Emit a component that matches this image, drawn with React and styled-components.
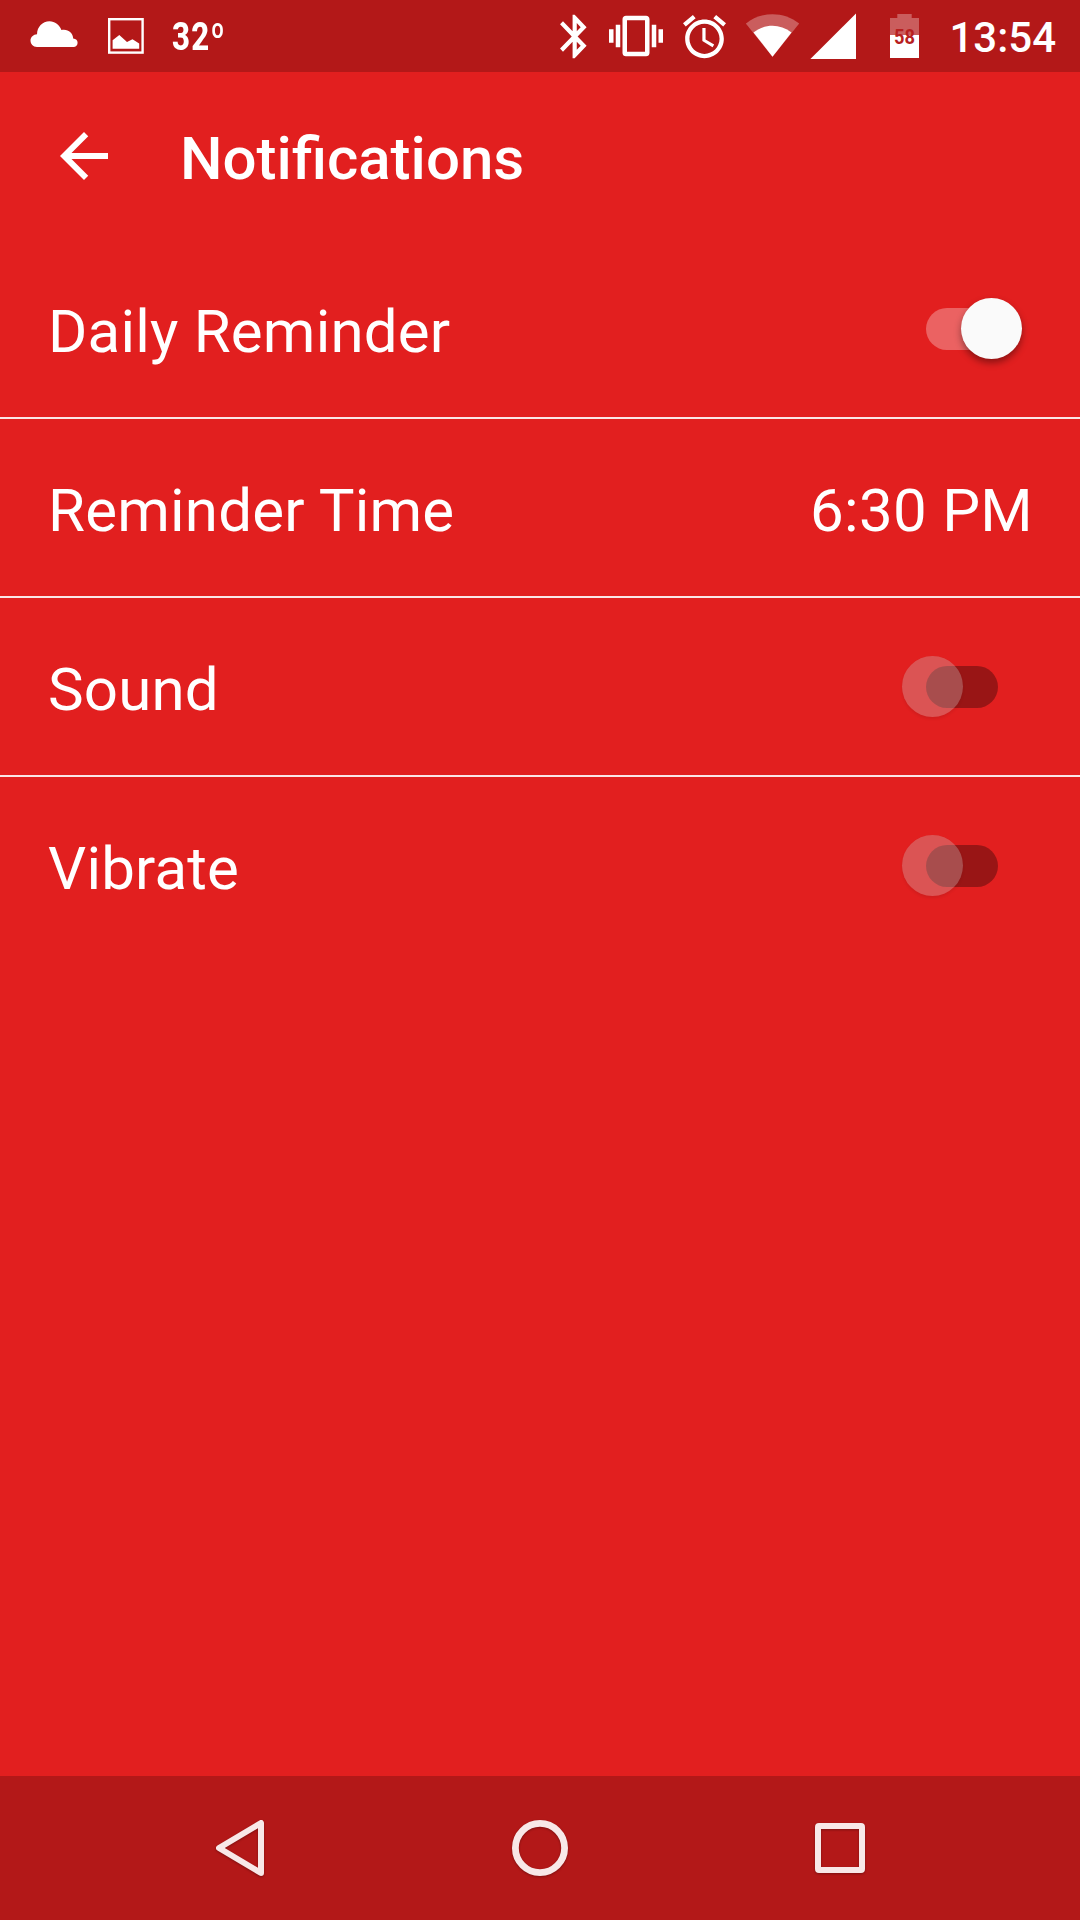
import React, { useState } from 'react';
import styled, { createGlobalStyle } from 'styled-components';

const GlobalStyle = createGlobalStyle`
  * {
    box-sizing: border-box;
  }

  body {
    margin: 0;
    background: #e21f1f;
  }
`;

const Screen = styled.div`
  width: 1080px;
  height: 1920px;
  display: flex;
  flex-direction: column;
  overflow: hidden;
  background: #e21f1f;
  color: #ffffff;
  font-family: Roboto, sans-serif;
`;

const StatusBar = styled.div`
  height: 72px;
  flex: none;
  display: flex;
  justify-content: space-between;
  padding: 0 24px 0 30px;
  background: #b31818;
`;

const StatusGroup = styled.div`
  display: flex;
  align-items: center;
`;

const StatusIcon = styled.svg`
  display: block;
  flex: none;
  height: 72px;
  width: ${(props) => props.$width}px;
  margin-right: ${(props) => props.$gap || 0}px;
  fill: #ffffff;
`;

const Temperature = styled.span`
  padding-top: 2px;
  font-size: 38px;
  font-weight: 800;
  line-height: 70px;
  letter-spacing: 1.5px;
  transform: scaleX(0.82);
  transform-origin: left center;
`;

const Clock = styled.span`
  width: 106px;
  padding: 3px 0 0;
  font-size: 42px;
  font-weight: 500;
  line-height: 69px;
  display: flex;
  justify-content: flex-end;
  white-space: nowrap;
`;

const Header = styled.header`
  height: 168px;
  flex: none;
  display: flex;
  align-items: center;
  padding-left: 48px;
`;

const BackButton = styled.button`
  width: 72px;
  height: 72px;
  margin-right: 60px;
  padding: 0;
  border: none;
  background: none;
  cursor: pointer;
`;

const Title = styled.h1`
  margin: 0;
  padding-top: 5px;
  font-size: 60px;
  font-weight: 500;
  line-height: 70px;
`;

const List = styled.main`
  flex: 1;
  display: flex;
  flex-direction: column;
`;

const Row = styled.div`
  height: 179px;
  display: flex;
  align-items: center;
  justify-content: space-between;
  padding: 0 48px;
  border-bottom: 2px solid #fbe6e6;

  &:last-child {
    border-bottom-color: transparent;
  }
`;

const Label = styled.span`
  padding-top: 6px;
  font-size: 60px;
  line-height: 70px;
  letter-spacing: 0.2px;
  white-space: nowrap;
`;

const Value = styled(Label)`
  letter-spacing: 0.3px;
  margin-right: -1px;
`;

const Track = styled.button`
  position: relative;
  width: 72px;
  height: 42px;
  margin-right: 34px;
  padding: 0;
  border: none;
  border-radius: 21px;
  background: ${(props) => (props.$on ? 'rgba(255, 255, 255, 0.3)' : 'rgba(0, 0, 0, 0.32)')};
  cursor: pointer;
`;

const Thumb = styled.span`
  position: absolute;
  top: -9.5px;
  left: ${(props) => (props.$on ? 35 : -24)}px;
  width: 61px;
  height: 61px;
  border-radius: 50%;
  background: ${(props) => (props.$on ? '#fafafa' : 'rgba(204, 204, 204, 0.31)')};
  box-shadow: ${(props) =>
    props.$on ? '0 4px 7px rgba(0, 0, 0, 0.38)' : '0 2px 3px rgba(0, 0, 0, 0.08)'};
`;

const NavBar = styled.nav`
  height: 144px;
  flex: none;
  display: flex;
  padding: 0 90px;
  background: #b31818;
`;

const NavButton = styled.button`
  flex: 1;
  display: flex;
  align-items: center;
  justify-content: center;
  padding: 0;
  border: none;
  background: none;
  cursor: pointer;

  svg {
    fill: none;
    stroke: #f8e8e8;
    stroke-width: 6;
    stroke-linejoin: round;
    filter: drop-shadow(0 1px 1px rgba(0, 0, 0, 0.3));
  }
`;

function Toggle({ label, defaultOn }) {
  const [on, setOn] = useState(defaultOn);

  return (
    <Track role="switch" aria-label={label} aria-checked={on} $on={on} onClick={() => setOn(!on)}>
      <Thumb $on={on} />
    </Track>
  );
}

export default function App() {
  return (
    <>
      <GlobalStyle />
      <Screen>
        <StatusBar>
          <StatusGroup>
            {/* weather */}
            <StatusIcon $width={48} $gap={30} viewBox="30 0 48 72">
              <path d="M37 47 C33 47 30.5 44.2 30.5 40.6 C30.5 37 33.4 34.4 37 34.2 C37 27 42.5 21.3 49.5 21.3 C55 21.3 59.5 24.8 61.4 30 C67.5 28.5 73 32.5 73.2 38.6 C76 38.8 77.6 40.5 77.6 42.8 C77.6 45.2 76 47 73.4 47 Z" />
            </StatusIcon>
            {/* screenshot */}
            <StatusIcon $width={36} $gap={28} viewBox="108 0 36 72">
              <rect x="109.2" y="19.2" width="33.4" height="33.4" fill="none" stroke="#fff" strokeWidth="2.4" />
              <path d="M112.6 48.7 V40.3 L119.3 35 L127 42 L132.5 39.3 L139.2 43.5 V48.7 Z" />
            </StatusIcon>
            <Temperature>32º</Temperature>
          </StatusGroup>
          <StatusGroup>
            {/* bluetooth */}
            <StatusIcon $width={27} $gap={22} viewBox="560 0 27 72">
              <path
                transform="translate(549.6 10.4) scale(2.09 2.17)"
                d="M17.71 7.71L12 2h-1v7.59L6.41 5 5 6.41 10.59 12 5 17.59 6.41 19 11 14.41V22h1l5.71-5.71-4.3-4.29 4.3-4.29zM13 5.83l1.88 1.88L13 9.59V5.83zm1.88 10.46L13 18.17v-3.76l1.88 1.88z"
              />
            </StatusIcon>
            {/* vibrate */}
            <StatusIcon $width={54} $gap={20} viewBox="609 0 54 72">
              <path
                transform="translate(609 9) scale(2.25)"
                d="M0 15h2V9H0v6zm3 2h2V7H3v10zm19-8v6h2V9h-2zm-3 8h2V7h-2v10zM16.5 3h-9C6.67 3 6 3.67 6 4.5v15c0 .83.67 1.5 1.5 1.5h9c.83 0 1.5-.67 1.5-1.5v-15c0-.83-.67-1.5-1.5-1.5zM16 19H8V5h8v14z"
              />
            </StatusIcon>
            {/* alarm */}
            <StatusIcon $width={43} $gap={20} viewBox="683 0 43 72">
              <path
                transform="translate(678.7 10.9) scale(2.15)"
                d="M22 5.72l-4.6-3.86-1.29 1.53 4.6 3.86L22 5.72zM7.88 3.39L6.6 1.86 2 5.71l1.29 1.53 4.59-3.85zM12.5 8H11v6l4.75 2.85.75-1.23-4-2.37V8zM12 4c-4.97 0-9 4.03-9 9s4.02 9 9 9c4.97 0 9-4.03 9-9s-4.03-9-9-9zm0 16c-3.87 0-7-3.13-7-7s3.13-7 7-7 7 3.13 7 7-3.13 7-7 7z"
              />
            </StatusIcon>
            {/* wifi */}
            <StatusIcon $width={54} $gap={10} viewBox="746 0 54 72">
              <path fillOpacity="0.3" d="M772.5 56.7 L745.8 23.6 C761 11 784 11 799.2 23.6 Z" />
              <path d="M772.5 56.7 L753.5 32.5 C765 23.5 780 23.5 791.5 32.5 Z" />
            </StatusIcon>
            {/* signal */}
            <StatusIcon $width={46} $gap={34} viewBox="810 0 46 72">
              <path d="M810.4 59 L856 13.4 V59 Z" />
            </StatusIcon>
            {/* battery */}
            <StatusIcon $width={29} $gap={31} viewBox="890 0 29 72">
              <path fillOpacity="0.3" d="M890 18 H897.3 V14 H911.7 V18 H919 V35 H890 Z" />
              <rect x="890" y="35" width="29" height="23" />
              <text x="904.5" y="44" textAnchor="middle" fontFamily="Roboto" fontSize="20.5" fontWeight="700" fill="#b81f1f" textLength="21" lengthAdjust="spacingAndGlyphs">
                58
              </text>
            </StatusIcon>
            <Clock>13:54</Clock>
          </StatusGroup>
        </StatusBar>

        <Header>
          <BackButton aria-label="Back">
            <svg width="72" height="72" viewBox="0 0 24 24" fill="#fff">
              <path d="M20 11H7.83l5.59-5.59L12 4l-8 8 8 8 1.41-1.41L7.83 13H20v-2z" />
            </svg>
          </BackButton>
          <Title>Notifications</Title>
        </Header>

        <List>
          <Row>
            <Label>Daily Reminder</Label>
            <Toggle label="Daily Reminder" defaultOn />
          </Row>
          <Row>
            <Label>Reminder Time</Label>
            <Value>6:30 PM</Value>
          </Row>
          <Row>
            <Label>Sound</Label>
            <Toggle label="Sound" defaultOn={false} />
          </Row>
          <Row>
            <Label>Vibrate</Label>
            <Toggle label="Vibrate" defaultOn={false} />
          </Row>
        </List>

        <NavBar>
          <NavButton aria-label="Back">
            <svg width="60" height="60" viewBox="0 0 60 60">
              <path d="M51 5 V55 L9 30 Z" />
            </svg>
          </NavButton>
          <NavButton aria-label="Home">
            <svg width="60" height="60" viewBox="0 0 60 60">
              <circle cx="30" cy="30" r="24.6" strokeWidth="6.8" />
            </svg>
          </NavButton>
          <NavButton aria-label="Recent apps">
            <svg width="60" height="60" viewBox="0 0 60 60">
              <rect x="8" y="8" width="44" height="44" rx="1" />
            </svg>
          </NavButton>
        </NavBar>
      </Screen>
    </>
  );
}
